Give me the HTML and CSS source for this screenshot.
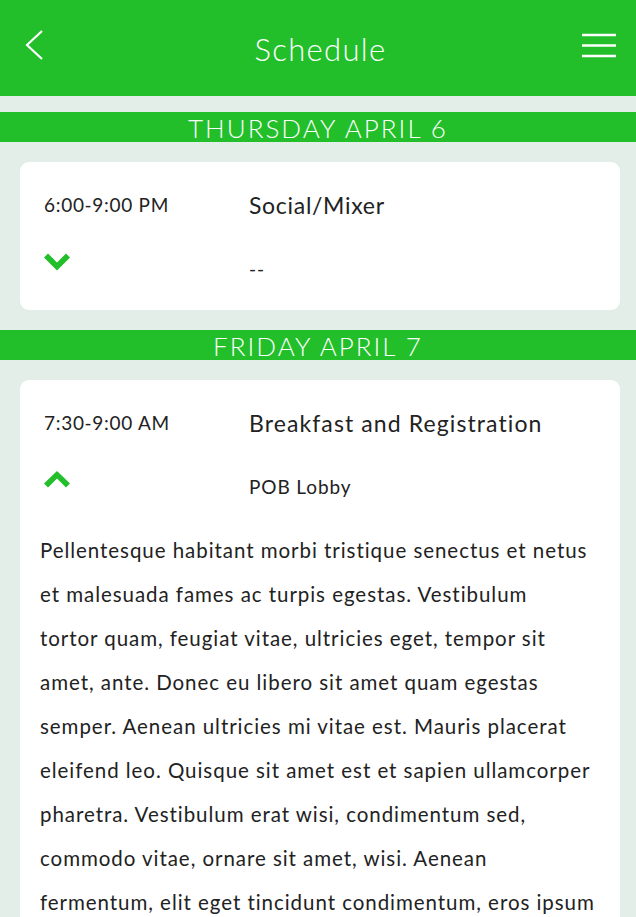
FILE: index.html
```html
<!DOCTYPE html>
<html>
<head>
<meta charset="utf-8">
<link rel="stylesheet" href="styles.css">
</head>
<body>
<header class="topbar">
  <svg class="back" width="20" height="32" viewBox="0 0 20 32"><polyline points="17,1 2,15 17,29" fill="none" stroke="#fff" stroke-width="2.2"/></svg>
  <h1 class="title">Schedule</h1>
  <svg class="menu" width="34" height="26" viewBox="0 0 34 26"><g stroke="#fff" stroke-width="2.4"><line x1="0" y1="2" x2="34" y2="2"/><line x1="0" y1="12.5" x2="34" y2="12.5"/><line x1="0" y1="23" x2="34" y2="23"/></g></svg>
</header>
<main class="content">
  <div class="day">THURSDAY APRIL 6</div>
  <section class="card">
    <div class="event">
      <div class="time">6:00-9:00 PM</div>
      <div class="name">Social/Mixer</div>
      <svg class="chev" width="26" height="18" viewBox="0 0 26 18"><polygon points="0,4.5 4,0.5 13,9.5 22,0.5 26,4.5 13,17.5" fill="#22bf2b"/></svg>
      <div class="place">--</div>
    </div>
  </section>
  <div class="day">FRIDAY APRIL 7</div>
  <section class="card">
    <div class="event">
      <div class="time">7:30-9:00 AM</div>
      <div class="name wide">Breakfast and Registration</div>
      <svg class="chev" width="26" height="17" viewBox="0 0 26 17"><polygon points="0,12.5 13,0 26,12.5 22,16.5 13,7.5 4,16.5" fill="#22bf2b"/></svg>
      <div class="place">POB Lobby</div>
    </div>
    <p class="desc">Pellentesque habitant morbi tristique senectus et netus<br>et malesuada fames ac turpis egestas. Vestibulum<br>tortor quam, feugiat vitae, ultricies eget, tempor sit<br>amet, ante. Donec eu libero sit amet quam egestas<br>semper. Aenean ultricies mi vitae est. Mauris placerat<br>eleifend leo. Quisque sit amet est et sapien ullamcorper<br>pharetra. Vestibulum erat wisi, condimentum sed,<br>commodo vitae, ornare sit amet, wisi. Aenean<br>fermentum, elit eget tincidunt condimentum, eros ipsum<br>rutrum orci, sagittis tempus lacus enim ac dui.</p>
  </section>
</main>
</body>
</html>
```
FILE: styles.css
```css
html, body {
  margin: 0;
  padding: 0;
}
body {
  background: #e4eee9;
  font-family: "Lato", "Open Sans", sans-serif;
  color: #222;
  overflow: hidden;
  height: 917px;
}
.topbar {
  height: 96px;
  background: #22bf2b;
  display: flex;
  align-items: center;
  justify-content: space-between;
  padding: 0 20px 0 25px;
  box-sizing: border-box;
}
.back {
  margin-top: -4px;
}
.menu {
  margin-top: -4px;
}
.title {
  margin: 0;
  font-weight: 300;
  font-size: 31px;
  color: #fff;
  letter-spacing: 1.3px;
  margin-top: 2px;
  margin-left: 14px;
}
.content {
  padding-top: 16px;
}
.day {
  background: #22bf2b;
  color: #fff;
  height: 30px;
  line-height: 32px;
  text-align: center;
  font-size: 26px;
  font-weight: 300;
  letter-spacing: 2px;
}
.card {
  background: #fff;
  border-radius: 9px;
  margin: 20px 16px 20px 20px;
  padding: 24px 20px 22px 20px;
}
.event {
  display: grid;
  grid-template-columns: 205px 1fr;
  row-gap: 26px;
  padding-left: 4px;
}
.time {
  font-size: 19px;
  line-height: 38px;
  letter-spacing: 0.7px;
}
.name {
  font-size: 23px;
  line-height: 38px;
  letter-spacing: 0.7px;
}
.name.wide {
  letter-spacing: 1.1px;
}
.chev {
  margin-top: 3px;
  display: block;
}
.place {
  font-size: 19px;
  line-height: 38px;
  letter-spacing: 0.9px;
}
.desc {
  margin: 22px 0 0 0;
  font-size: 20.5px;
  line-height: 44px;
  letter-spacing: 0.95px;
  white-space: nowrap;
}
```
